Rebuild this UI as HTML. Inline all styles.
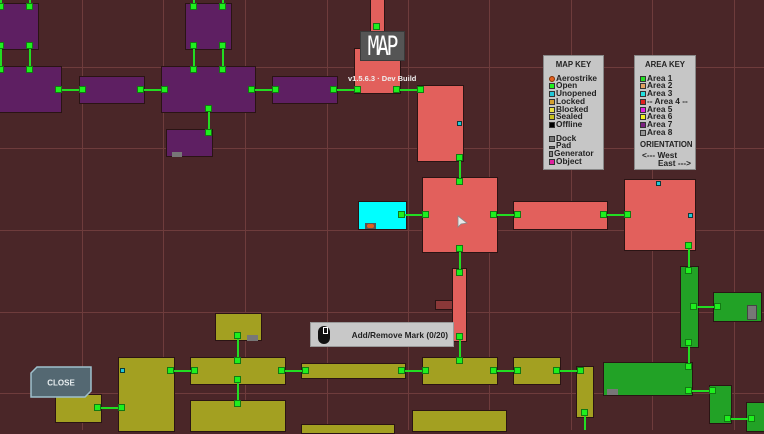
<!DOCTYPE html>
<html><head><meta charset="utf-8"><style>
*{margin:0;padding:0;box-sizing:border-box}
body{width:764px;height:430px;overflow:hidden;background:#4a2628;position:relative;font-family:"Liberation Sans",sans-serif}
.g{position:absolute;background:#6e3c3c}
.r{position:absolute;border:1px solid #2a1414}
.p{background:#5e1f62}.rd{background:#e2605c}.ol{background:#a3a021}.gr{background:#22a226}.cy{background:#00ffff}
.l{position:absolute;background:#22dd22}
.n{position:absolute;width:7px;height:7px;background:#1ef01e;border:1px solid #137a13}
.u{position:absolute;width:5px;height:5px;background:#22c8d8;border:1px solid #0a3a3a}
.key{position:absolute;background:#c6c6c6;border:1px solid #888;font-size:8.3px;font-weight:bold;color:#222;line-height:7.7px;padding:5px 5px;white-space:nowrap}
.key .t{text-align:center;font-size:7.8px;margin-bottom:6px}
.sw{display:inline-block;width:6px;height:6px;border:1px solid #333;margin-right:1px;vertical-align:-1px}
</style></head><body>
<div class="g" style="left:82px;top:0;width:1px;height:430px"></div>
<div class="g" style="left:163px;top:0;width:1px;height:430px"></div>
<div class="g" style="left:245px;top:0;width:1px;height:430px"></div>
<div class="g" style="left:327px;top:0;width:1px;height:430px"></div>
<div class="g" style="left:408px;top:0;width:1px;height:430px"></div>
<div class="g" style="left:489px;top:0;width:1px;height:430px"></div>
<div class="g" style="left:571px;top:0;width:1px;height:430px"></div>
<div class="g" style="left:652px;top:0;width:1px;height:430px"></div>
<div class="g" style="left:734px;top:0;width:1px;height:430px"></div>
<div class="g" style="left:0;top:67px;width:764px;height:1px"></div>
<div class="g" style="left:0;top:148px;width:764px;height:1px"></div>
<div class="g" style="left:0;top:230px;width:764px;height:1px"></div>
<div class="g" style="left:0;top:312px;width:764px;height:1px"></div>
<div class="g" style="left:0;top:393px;width:764px;height:1px"></div>

<div class="r p" style="left:-1px;top:3px;width:40px;height:47px"></div>
<div class="r p" style="left:-1px;top:66px;width:63px;height:47px"></div>
<div class="r p" style="left:79px;top:76px;width:66px;height:28px"></div>
<div class="r p" style="left:185px;top:3px;width:47px;height:47px"></div>
<div class="r p" style="left:161px;top:66px;width:95px;height:47px"></div>
<div class="r p" style="left:272px;top:76px;width:66px;height:28px"></div>
<div class="r p" style="left:166px;top:129px;width:47px;height:28px"></div>
<div style="position:absolute;left:172px;top:152px;width:10px;height:5px;background:#777"></div>
<div class="r rd" style="left:370px;top:-2px;width:15px;height:40px"></div>
<div class="r rd" style="left:354px;top:48px;width:47px;height:46px"></div>
<div class="r rd" style="left:417px;top:85px;width:47px;height:77px"></div>
<div class="r rd" style="left:422px;top:177px;width:76px;height:76px"></div>
<div class="r rd" style="left:513px;top:201px;width:95px;height:29px"></div>
<div class="r rd" style="left:624px;top:179px;width:72px;height:72px"></div>
<div class="r rd" style="left:452px;top:268px;width:15px;height:74px"></div>
<div class="r" style="left:435px;top:300px;width:18px;height:10px;background:#8a3838"></div>
<div class="r cy" style="left:358px;top:201px;width:49px;height:29px"></div>
<div style="position:absolute;left:365px;top:223px;width:11px;height:6px;background:#555"><div style="margin:1px 2px;width:7px;height:4px;background:#e26020;border-radius:3px"></div></div>
<div class="r gr" style="left:680px;top:266px;width:19px;height:82px"></div>
<div class="r gr" style="left:713px;top:292px;width:49px;height:30px"></div>
<div style="position:absolute;left:747px;top:305px;width:10px;height:15px;background:#777;border:1px solid #444"></div>
<div class="r gr" style="left:603px;top:362px;width:90px;height:34px"></div>
<div style="position:absolute;left:607px;top:389px;width:11px;height:6px;background:#777"></div>
<div class="r gr" style="left:709px;top:385px;width:23px;height:39px"></div>
<div class="r gr" style="left:746px;top:402px;width:20px;height:30px"></div>
<div class="r ol" style="left:215px;top:313px;width:47px;height:28px"></div>
<div style="position:absolute;left:247px;top:335px;width:11px;height:6px;background:#777"></div>
<div class="r ol" style="left:118px;top:357px;width:57px;height:75px"></div>
<div class="r ol" style="left:55px;top:394px;width:47px;height:29px"></div>
<div class="r ol" style="left:190px;top:357px;width:96px;height:28px"></div>
<div class="r ol" style="left:190px;top:400px;width:96px;height:32px"></div>
<div class="r ol" style="left:301px;top:363px;width:105px;height:16px"></div>
<div class="r ol" style="left:422px;top:357px;width:76px;height:28px"></div>
<div class="r ol" style="left:513px;top:357px;width:48px;height:28px"></div>
<div class="r ol" style="left:576px;top:366px;width:18px;height:52px"></div>
<div class="r ol" style="left:301px;top:424px;width:94px;height:10px"></div>
<div class="r ol" style="left:412px;top:410px;width:95px;height:22px"></div>

<div class="l" style="left:0;top:0;width:2px;height:7px"></div>
<div class="l" style="left:29px;top:0;width:2px;height:7px"></div>
<div class="l" style="left:0;top:45px;width:2px;height:25px"></div>
<div class="l" style="left:29px;top:45px;width:2px;height:25px"></div>
<div class="l" style="left:193px;top:0;width:2px;height:7px"></div>
<div class="l" style="left:222px;top:0;width:2px;height:7px"></div>
<div class="l" style="left:193px;top:45px;width:2px;height:25px"></div>
<div class="l" style="left:222px;top:45px;width:2px;height:25px"></div>
<div class="l" style="left:58px;top:89px;width:25px;height:2px"></div>
<div class="l" style="left:140px;top:89px;width:25px;height:2px"></div>
<div class="l" style="left:251px;top:89px;width:25px;height:2px"></div>
<div class="l" style="left:333px;top:89px;width:25px;height:2px"></div>
<div class="l" style="left:396px;top:89px;width:25px;height:2px"></div>
<div class="l" style="left:208px;top:108px;width:2px;height:25px"></div>
<div class="l" style="left:459px;top:157px;width:2px;height:24px"></div>
<div class="l" style="left:401px;top:214px;width:25px;height:2px"></div>
<div class="l" style="left:493px;top:214px;width:25px;height:2px"></div>
<div class="l" style="left:603px;top:214px;width:25px;height:2px"></div>
<div class="l" style="left:459px;top:248px;width:2px;height:25px"></div>
<div class="l" style="left:459px;top:336px;width:2px;height:25px"></div>
<div class="l" style="left:688px;top:246px;width:2px;height:24px"></div>
<div class="l" style="left:693px;top:306px;width:25px;height:2px"></div>
<div class="l" style="left:688px;top:343px;width:2px;height:24px"></div>
<div class="l" style="left:688px;top:390px;width:25px;height:2px"></div>
<div class="l" style="left:727px;top:418px;width:25px;height:2px"></div>
<div class="l" style="left:170px;top:370px;width:25px;height:2px"></div>
<div class="l" style="left:97px;top:407px;width:25px;height:2px"></div>
<div class="l" style="left:237px;top:336px;width:2px;height:25px"></div>
<div class="l" style="left:237px;top:380px;width:2px;height:24px"></div>
<div class="l" style="left:281px;top:370px;width:25px;height:2px"></div>
<div class="l" style="left:401px;top:370px;width:25px;height:2px"></div>
<div class="l" style="left:493px;top:370px;width:25px;height:2px"></div>
<div class="l" style="left:556px;top:370px;width:25px;height:2px"></div>
<div class="l" style="left:584px;top:413px;width:2px;height:17px"></div>

<div class="n" style="left:-3px;top:3px"></div><div class="n" style="left:26px;top:3px"></div>
<div class="n" style="left:-3px;top:42px"></div><div class="n" style="left:26px;top:42px"></div>
<div class="n" style="left:-3px;top:66px"></div><div class="n" style="left:26px;top:66px"></div>
<div class="n" style="left:190px;top:3px"></div><div class="n" style="left:219px;top:3px"></div>
<div class="n" style="left:190px;top:42px"></div><div class="n" style="left:219px;top:42px"></div>
<div class="n" style="left:190px;top:66px"></div><div class="n" style="left:219px;top:66px"></div>
<div class="n" style="left:55px;top:86px"></div><div class="n" style="left:79px;top:86px"></div>
<div class="n" style="left:137px;top:86px"></div><div class="n" style="left:161px;top:86px"></div>
<div class="n" style="left:248px;top:86px"></div><div class="n" style="left:272px;top:86px"></div>
<div class="n" style="left:330px;top:86px"></div><div class="n" style="left:354px;top:86px"></div>
<div class="n" style="left:393px;top:86px"></div><div class="n" style="left:417px;top:86px"></div>
<div class="n" style="left:205px;top:105px"></div><div class="n" style="left:205px;top:129px"></div>
<div class="n" style="left:373px;top:23px"></div>
<div class="n" style="left:456px;top:154px"></div><div class="n" style="left:456px;top:178px"></div>
<div class="n" style="left:398px;top:211px"></div><div class="n" style="left:422px;top:211px"></div>
<div class="n" style="left:490px;top:211px"></div><div class="n" style="left:514px;top:211px"></div>
<div class="n" style="left:600px;top:211px"></div><div class="n" style="left:624px;top:211px"></div>
<div class="n" style="left:456px;top:245px"></div><div class="n" style="left:456px;top:269px"></div>
<div class="n" style="left:456px;top:333px"></div><div class="n" style="left:456px;top:357px"></div>
<div class="n" style="left:685px;top:242px"></div><div class="n" style="left:685px;top:267px"></div>
<div class="n" style="left:690px;top:303px"></div><div class="n" style="left:714px;top:303px"></div>
<div class="n" style="left:685px;top:339px"></div><div class="n" style="left:685px;top:363px"></div>
<div class="n" style="left:685px;top:387px"></div><div class="n" style="left:709px;top:387px"></div>
<div class="n" style="left:724px;top:415px"></div><div class="n" style="left:748px;top:415px"></div>
<div class="n" style="left:167px;top:367px"></div><div class="n" style="left:191px;top:367px"></div>
<div class="n" style="left:94px;top:404px"></div><div class="n" style="left:118px;top:404px"></div>
<div class="n" style="left:234px;top:332px"></div><div class="n" style="left:234px;top:357px"></div>
<div class="n" style="left:234px;top:376px"></div><div class="n" style="left:234px;top:400px"></div>
<div class="n" style="left:278px;top:367px"></div><div class="n" style="left:302px;top:367px"></div>
<div class="n" style="left:398px;top:367px"></div><div class="n" style="left:422px;top:367px"></div>
<div class="n" style="left:490px;top:367px"></div><div class="n" style="left:514px;top:367px"></div>
<div class="n" style="left:553px;top:367px"></div><div class="n" style="left:577px;top:367px"></div>
<div class="n" style="left:581px;top:409px"></div>
<div class="u" style="left:120px;top:368px"></div>
<div class="u" style="left:457px;top:121px"></div>
<div class="u" style="left:656px;top:181px"></div>
<div class="u" style="left:688px;top:213px"></div>

<div style="position:absolute;left:360px;top:31px;width:45px;height:30px;background:#555;border:1px solid #3a3a3a;color:#fff;font-family:'DejaVu Sans Mono','Liberation Mono',monospace;font-size:27px;line-height:30px;text-align:center;letter-spacing:-3px;padding-right:2px"><span style="display:inline-block;transform:scaleX(0.72)">MAP</span></div>
<div style="position:absolute;left:348px;top:74px;font-size:7.5px;font-weight:bold;color:#eee;white-space:nowrap">v1.5.6.3 · Dev Build</div>

<div class="key" style="left:543px;top:55px;width:61px;height:115px">
<div class="t">MAP KEY</div>
<div><span class="sw" style="background:#e26020;border-radius:3px;border-color:#803000"></span>Aerostrike</div>
<div><span class="sw" style="background:#1ef01e"></span>Open</div>
<div><span class="sw" style="background:#22c8d8"></span>Unopened</div>
<div><span class="sw" style="background:#d4a030"></span>Locked</div>
<div><span class="sw" style="background:#e8e040"></span>Blocked</div>
<div><span class="sw" style="background:#c8c020"></span>Sealed</div>
<div><span class="sw" style="background:#000"></span>Offline</div>
<div style="height:6px"></div>
<div><span class="sw" style="background:#777"></span>Dock</div>
<div><span class="sw" style="background:#666;height:3px"></span>Pad</div>
<div><span class="sw" style="background:#888;width:4px"></span>Generator</div>
<div><span class="sw" style="background:#e020a0"></span>Object</div>
</div>
<div class="key" style="left:634px;top:55px;width:62px;height:115px">
<div class="t">AREA KEY</div>
<div><span class="sw" style="background:#22dd22"></span>Area 1</div>
<div><span class="sw" style="background:#e0a060"></span>Area 2</div>
<div><span class="sw" style="background:#20e0e0"></span>Area 3</div>
<div><span class="sw" style="background:#e02020"></span>-- Area 4 --</div>
<div><span class="sw" style="background:#e020e0"></span>Area 5</div>
<div><span class="sw" style="background:#f0f020"></span>Area 6</div>
<div><span class="sw" style="background:#7a2080"></span>Area 7</div>
<div><span class="sw" style="background:#999"></span>Area 8</div>
<div class="t" style="margin:5px 0 3px">ORIENTATION</div>
<div style="padding-left:2px">&lt;--- West</div>
<div style="padding-left:18px">East ---&gt;</div>
</div>

<svg style="position:absolute;left:457px;top:215px" width="12" height="14"><path d="M1 1 L1 12 L4 9 L10 8 Z" fill="#e8e8e8" stroke="#888" stroke-width="0.8"/></svg>

<div style="position:absolute;left:310px;top:322px;width:144px;height:25px;background:#c8c8c8;border:1px solid #999">
<svg style="position:absolute;left:6px;top:2px" width="14" height="20"><rect x="1" y="1" width="12" height="18" rx="6" fill="#111"/><rect x="6" y="2" width="5" height="7" fill="#fff"/><rect x="7" y="3" width="3" height="5" fill="#111"/></svg>
<div style="position:absolute;right:5px;top:7px;font-size:8.3px;font-weight:bold;color:#222;white-space:nowrap">Add/Remove Mark (0/20)</div>
</div>

<svg style="position:absolute;left:30px;top:366px" width="63" height="33"><path d="M7 1 H61 V25 L55 31 H1 V7 Z" fill="#546872" stroke="#9ec0cc" stroke-width="1.5"/><text x="31" y="19.5" text-anchor="middle" font-family="Liberation Sans" font-weight="bold" font-size="8" fill="#e8eef0">CLOSE</text></svg>
</body></html>
